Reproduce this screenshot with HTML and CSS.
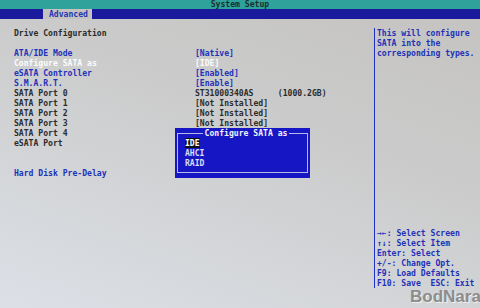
FILE: index.html
```html
<!DOCTYPE html>
<html lang="en">

<head>
    <meta charset="UTF-8">
    <meta name="viewport" content="width=device-width, initial-scale=1.0">
    <title>System Setup</title>
    <link rel="stylesheet" href="styles.css">
</head>

<body>
    <div class="screen">
        <header class="title-bar">System Setup</header>
        <nav class="tab-bar">
            <span class="tab">Advanced</span>
        </nav>

        <div class="content">
            <main class="settings">
                <div class="label heading">Drive Configuration</div>
                <div class="value"></div>
                <div class="label blank"></div>
                <div class="value"></div>

                <div class="label link">ATA/IDE Mode</div>
                <div class="value link">[Native]</div>
                <div class="label selected">Configure SATA as</div>
                <div class="value selected">[IDE]</div>
                <div class="label link">eSATA Controller</div>
                <div class="value link">[Enabled]</div>
                <div class="label link">S.M.A.R.T.</div>
                <div class="value link">[Enable]</div>
                <div class="label">SATA Port 0</div>
                <div class="value">ST31000340AS     (1000.2GB)</div>
                <div class="label">SATA Port 1</div>
                <div class="value">[Not Installed]</div>
                <div class="label">SATA Port 2</div>
                <div class="value">[Not Installed]</div>
                <div class="label">SATA Port 3</div>
                <div class="value">[Not Installed]</div>
                <div class="label">SATA Port 4</div>
                <div class="value"></div>
                <div class="label">eSATA Port</div>
                <div class="value"></div>
                <div class="label blank"></div>
                <div class="value"></div>
                <div class="label blank"></div>
                <div class="value"></div>
                <div class="label link">Hard Disk Pre-Delay</div>
                <div class="value"></div>
            </main>

            <aside class="help">
                <div class="help-text">
                    <div class="line">This will configure</div>
                    <div class="line">SATA into the</div>
                    <div class="line">corresponding types.</div>
                </div>
                <div class="keys">
                    <div class="line">&rarr;&larr;: Select Screen</div>
                    <div class="line">&uarr;&darr;: Select Item</div>
                    <div class="line">Enter: Select</div>
                    <div class="line">+/-: Change Opt.</div>
                    <div class="line">F9: Load Defaults</div>
                    <div class="line">F10: Save  ESC: Exit</div>
                </div>
            </aside>
        </div>

        <!-- option popup for the selected item -->
        <div class="popup">
            <div class="popup-frame">
                <div class="popup-title">Configure SATA as</div>
                <div class="popup-item"><span class="current">IDE</span></div>
                <div class="popup-item">AHCI</div>
                <div class="popup-item">RAID</div>
            </div>
        </div>

        <div class="watermark">BodNara</div>
    </div>
</body>
</html>
```

FILE: styles.css
```css
body {
    margin: 0;
    font-family: "DejaVu Sans Mono", "Liberation Mono", monospace;
    font-size: 8.1px;
    font-weight: bold;
    line-height: 10px;
}

.screen {
    position: relative;
    width: 480px;
    height: 308px;
    overflow: hidden;
    background: linear-gradient(200deg, #c4c3c1 0%, #cbcbcb 40%, #dce0e6 100%);
    color: #2c2c2c;
}

.title-bar {
    height: 9px;
    line-height: 9px;
    background-color: #2fa39b;
    color: #17302e;
    text-align: center;
}

.tab-bar {
    height: 10px;
    line-height: 10px;
    background-color: #1a1a9c;
    padding-left: 43px;
}

.tab {
    display: inline-block;
    height: 10px;
    padding: 0 4px 0 6px;
    background-color: #c4c3c1;
    color: #2536b4;
}

.content {
    display: flex;
    height: 289px;
    box-sizing: border-box;
    padding: 9px 0 20px 0;
}

.settings {
    width: 374px;
    box-sizing: border-box;
    padding-left: 14px;
    display: grid;
    grid-template-columns: 181px 1fr;
    grid-auto-rows: 10px;
    align-content: start;
}

.label,
.value,
.line {
    white-space: pre;
}

.blank {
    height: 10px;
}

.link {
    color: #2232b8;
}

.selected {
    color: #fbfbfb;
}

.help {
    flex: 1;
    border-left: 1.5px solid #2030c4;
    padding-left: 2px;
    display: flex;
    flex-direction: column;
    justify-content: space-between;
    color: #2232b8;
}

.popup {
    position: absolute;
    left: 175px;
    top: 128px;
    width: 135px;
    height: 50px;
    box-sizing: border-box;
    padding: 5px 2px;
    background-color: #1616c4;
    color: #dcdcf2;
}

.popup-frame {
    height: 40px;
    box-sizing: border-box;
    border: 1px solid #b8b8e6;
    padding-left: 7px;
}

.popup-title {
    width: fit-content;
    margin: -6px auto 0;
    padding: 0 2px;
    background-color: #1616c4;
    color: #f2f2fa;
}

.current {
    background-color: #101010;
    color: #ffffff;
}

.watermark {
    position: absolute;
    left: 410px;
    top: 288px;
    font-family: "Liberation Sans", Arial, sans-serif;
    font-size: 17px;
    line-height: 18px;
    font-weight: bold;
    color: #8c8c8c;
    text-shadow: 1px 1px 0 #f0f0f0;
}
```
